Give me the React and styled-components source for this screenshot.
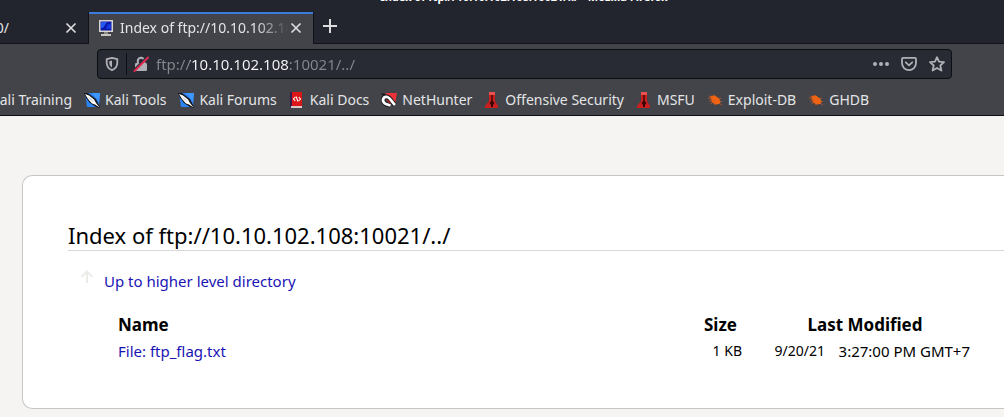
import React, { useState } from "react";
import styled, { createGlobalStyle } from "styled-components";

const GlobalStyle = createGlobalStyle`
    * {
        box-sizing: border-box;
    }
    body {
        margin: 0;
        background: #f5f4f2;
        font-family: "Noto Sans", sans-serif;
        overflow-x: hidden;
    }
`;

const Window = styled.div`
    overflow: hidden;
`;

const Chrome = styled.header`
    background: #42444a;
    color: #e4e4e6;
    font-size: 14px;
    line-height: 20px;
    border-bottom: 1px solid #0d0e12;
`;

const TitleBar = styled.div`
    display: flex;
    justify-content: center;
    align-items: flex-end;
    height: 4px;
    padding-left: 44px;
    overflow: hidden;
    background: #23252e;
    color: #ffffff;
    font-size: 11px;
    font-weight: 700;
    line-height: 14px;
    white-space: nowrap;
`;

const TabStrip = styled.div`
    display: flex;
    height: 40px;
    padding-top: 8px;
    background: #23252e;
    box-shadow: inset 0 -1px #101217;
`;

const Tab = styled.div`
    display: flex;
    align-items: center;
    justify-content: flex-end;
    width: ${({ $active }) => ($active ? "226px" : "88px")};
    padding: 0 9px 0 ${({ $active }) => ($active ? "9px" : "0")};
    background: ${({ $active }) => ($active ? "#42444a" : "transparent")};
    border: solid #101217;
    border-width: ${({ $active }) => ($active ? "0 1px" : "0")};
    box-shadow: ${({ $active }) => ($active ? "inset 0 2px #3a7bdc" : "none")};
`;

const TabTitle = styled.span`
    flex: 1;
    margin-left: 6px;
    overflow: hidden;
    white-space: nowrap;
    mask-image: linear-gradient(to left, transparent, #000 32px);
`;

const ClippedTitle = styled.span`
    display: flex;
    flex: 1;
    justify-content: flex-end;
    margin-right: 54px;
    overflow: hidden;
`;

const IconButton = styled.button`
    display: flex;
    flex: none;
    align-items: center;
    justify-content: center;
    width: ${({ $width }) => $width || 16}px;
    height: 28px;
    padding: 0;
    border: 0;
    background: none;
    color: ${({ $bright }) => ($bright ? "#dcdcde" : "#b0b1b6")};
`;

const NavBar = styled.div`
    padding: 5px 52px 5px 97px;
`;

const UrlBar = styled.div`
    display: flex;
    align-items: center;
    height: 30px;
    padding: 0 4px 0 6px;
    border: 1px solid #0d0e12;
    border-radius: 4px;
    background: #282a34;
`;

const UrlDivider = styled.span`
    width: 1px;
    height: 22px;
    margin: 0 6px;
    background: #0d0e12;
`;

// The host part is brighter than the scheme and the path
const UrlInput = styled.input`
    flex: 1;
    min-width: 0;
    height: 28px;
    margin-left: 7px;
    padding: 0;
    border: 0;
    outline: 0;
    font: inherit;
    font-size: 15px;
    background: linear-gradient(
        to right,
        #86878d 34px,
        #f9f9fa 34px,
        #f9f9fa 132px,
        #86878d 132px
    );
    background-clip: text;
    color: transparent;
`;

const UrlActions = styled.div`
    display: flex;
    gap: 8px;
`;

const Bookmarks = styled.nav`
    display: flex;
    align-items: center;
    gap: 12px;
    height: 31px;
`;

const Bookmark = styled.a`
    display: flex;
    flex: none;
    align-items: center;
    justify-content: flex-end;
    gap: 5px;
    width: ${({ $clip }) => ($clip ? "72px" : "auto")};
    overflow: ${({ $clip }) => ($clip ? "hidden" : "visible")};
    color: inherit;
    text-decoration: none;
    white-space: nowrap;
`;

const Listing = styled.main`
    margin: 59px 0 9px 22px;
    padding: 44px 0 45px 45px;
    border: 1px solid #c8c6c2;
    border-right: 0;
    border-radius: 10px 0 0 10px;
    background: #ffffff;
    color: #000000;
`;

const Heading = styled.h1`
    margin: 0;
    border-bottom: 1px solid #d8d8d8;
    font-size: 22px;
    font-weight: 400;
    line-height: 30px;
`;

const UpRow = styled.p`
    display: flex;
    gap: 10px;
    margin: 18px 0 0 12px;
    font-size: 15px;
    line-height: 24px;
`;

const Link = styled.a`
    color: #1a14b4;
    text-decoration: none;
`;

const FileTable = styled.table`
    width: calc(100% - 84px);
    margin: 18px 34px 0 50px;
    border-collapse: collapse;
    font-size: 14px;
    line-height: 24px;
    white-space: nowrap;
`;

const HeadCell = styled.th`
    padding: 0 0 0 ${({ $indent }) => $indent || 0}px;
    font-size: 17px;
    font-weight: 700;
    line-height: 28px;
    text-align: ${({ $align }) => $align || "center"};
`;

const Cell = styled.td`
    width: ${({ $width }) => $width || "auto"};
    padding: 0;
    font-size: ${({ $large }) => ($large ? "15px" : "inherit")};
    text-align: ${({ $align }) => $align || "left"};
`;

const CloseIcon = () => (
    <svg width="12" height="12" viewBox="0 0 12 12" stroke="currentColor" strokeWidth="1.7">
        <path d="M1.5 1.5l9 9M10.500 1.500l-9 9" />
    </svg>
);

const ComputerIcon = () => (
    <svg width="16" height="16" viewBox="0 0 16 16">
        <path d="M1 0h14v12H1z" fill="#d9d6cf" />
        <path d="M2.500 1.500h11v9h-11z" fill="#0a16a8" />
        <path d="M3 2h6L5 8H3z" fill="#2456f0" />
        <path d="M9 5l4-2v6H8z" fill="#1435d8" />
        <path d="M6 12h4v2H6z" fill="#8c8a85" />
        <path d="M3 14h10v2H3z" fill="#c9c6c0" />
    </svg>
);

const ShieldIcon = () => (
    <svg width="16" height="16" viewBox="0 0 16 16" fill="none" stroke="currentColor">
        <path
            d="M8 1.800l5.300 1.400v3.600c0 3.400-2 6-5.300 7.400-3.300-1.400-5.300-4-5.300-7.400V3.200z"
            strokeWidth="1.800"
            strokeLinejoin="round"
        />
        <path d="M8 4.500v7C6.200 10.300 5.300 8.600 5.300 6.700V5.200z" fill="currentColor" stroke="none" />
    </svg>
);

const LockIcon = () => (
    <svg width="16" height="16" viewBox="0 0 16 16">
        <path d="M4.800 8V5a3.200 3.200 0 016.400 0v3" fill="none" stroke="#b0b1b6" strokeWidth="2" />
        <rect x="2" y="7" width="12" height="8" rx="1.200" fill="#b0b1b6" />
        <path d="M1.500 13.500L14 1" stroke="#282a34" strokeWidth="2" />
        <path d="M1.500 15L15 1.500" stroke="#e22850" strokeWidth="2" strokeLinecap="round" />
    </svg>
);

const DotsIcon = () => (
    <svg width="16" height="16" viewBox="0 0 16 16" fill="currentColor">
        <circle cx="2" cy="8" r="2" />
        <circle cx="8" cy="8" r="2" />
        <circle cx="14" cy="8" r="2" />
    </svg>
);

const PocketIcon = () => (
    <svg
        width="16"
        height="16"
        viewBox="0 0 16 16"
        fill="none"
        stroke="currentColor"
        strokeWidth="1.800"
        strokeLinecap="round"
        strokeLinejoin="round"
    >
        <path d="M2 1.900h12c.6 0 1 .4 1 1v4.200a7 7 0 01-14 0V2.900c0-.6.4-1 1-1z" />
        <path d="M4.800 6.300L8 9.300l3.200-3" />
    </svg>
);

const StarIcon = () => (
    <svg
        width="16"
        height="16"
        viewBox="0 0 16 16"
        fill="none"
        stroke="currentColor"
        strokeWidth="1.800"
        strokeLinejoin="round"
    >
        <path d="M8 1.200l2 4.500 5 .5-3.700 3.300 1.100 5.100L8 12l-4.400 2.600 1.100-5.100L1 6.200l5-.5z" />
    </svg>
);

const UpIcon = () => (
    <svg width="14" height="16" viewBox="0 0 14 16" fill="none" stroke="#ecebe8" strokeWidth="2">
        <path d="M7 14V3M1.500 8L7 2.500 12.500 8" />
    </svg>
);

const ToolIcon = () => (
    <svg width="16" height="16" viewBox="0 0 16 16">
        <path d="M1 1h15l-1 14H3z" fill="#2b83f2" />
        <path d="M8 1h8l-1 9z" fill="#3e97ff" />
        <path d="M0 1l4 0 8 6 3 6 1 3-4-1-6-4-4-5z" fill="#15171c" />
        <path d="M1 2l4 1.500 5 4 2 3.500 3.500 4.500-4.500-3-3-1L4 7z" fill="#ffffff" />
        <path d="M5 5.500l4 4" stroke="#9aa0aa" strokeWidth=".8" />
    </svg>
);

const DocsIcon = () => (
    <svg width="16" height="16" viewBox="0 0 16 16">
        <path d="M1 0h2v15H1z" fill="#3a1c4a" />
        <path d="M3 0h10v14H3z" fill="#dc1616" />
        <path d="M2 14h11v2H2z" fill="#d8c8c8" />
        <path
            d="M6.300 5L4.500 7l1.800 2M9.700 5l1.800 2-1.800 2M7 4.500l2 5"
            fill="none"
            stroke="#ffffff"
            strokeWidth="1.100"
        />
    </svg>
);

const HunterIcon = () => (
    <svg width="16" height="16" viewBox="0 0 16 16">
        <path d="M4 1h12l-2 11z" fill="#ec3238" />
        <path d="M0 1l5 1-3 2z" fill="#17181c" />
        <path
            d="M9.500 13.500L5 12C0 9.500 2 4 6.500 5c3 .8 4 5 7.500 8"
            fill="none"
            stroke="#17181c"
            strokeWidth="4.600"
        />
        <path
            d="M9.500 13.500L5 12C0 9.500 2 4 6.500 5c3 .8 4 5 7.500 8"
            fill="none"
            stroke="#ffffff"
            strokeWidth="2.800"
        />
        <path d="M5.500 8.500c2-.5 2 1.500 4 3" fill="none" stroke="#a82329" strokeWidth="1.400" />
    </svg>
);

const TowerIcon = () => (
    <svg width="16" height="16" viewBox="0 0 16 16">
        <path d="M5 0h6v9l3 5v2H1v-2l4-5z" fill="#c9201f" />
        <path d="M5 0h6v3H5z" fill="#e8514d" />
        <path d="M7.300 3h1.400v6l1.800 2-1.500 2v2H7v-2l-1.500-2 1.800-2z" fill="#3a0707" />
    </svg>
);

const BugIcon = () => (
    <svg width="16" height="16" viewBox="0 0 16 16">
        <path d="M3 4l5-.5 4 3 1.500 3-1 2.500-4 .5-3.500-2z" fill="#ef6414" />
        <path
            d="M1 6l4 1M2 4l3 1M6 3l2 1M2 9l4-.5M3.500 11.500L7 10M7 13l2-1M12 6.500l2-.5M12 11l3 2M13 9.500h2"
            stroke="#c9571f"
            strokeWidth=".8"
        />
    </svg>
);

const bookmarks = [
    { name: "Kali Tools", Icon: ToolIcon },
    { name: "Kali Forums", Icon: ToolIcon },
    { name: "Kali Docs", Icon: DocsIcon },
    { name: "NetHunter", Icon: HunterIcon },
    { name: "Offensive Security", Icon: TowerIcon },
    { name: "MSFU", Icon: TowerIcon },
    { name: "Exploit-DB", Icon: BugIcon },
    { name: "GHDB", Icon: BugIcon },
];

const files = [{ name: "ftp_flag.txt", size: "1 KB", date: "9/20/21", time: "3:27:00 PM GMT+7" }];

const App = () => {
    const [url, setUrl] = useState("ftp://10.10.102.108:10021/../");

    return (
        <Window>
            <GlobalStyle />
            <Chrome>
                <TitleBar>Index of ftp://10.10.102.108:10021/../ - Mozilla Firefox</TitleBar>
                <TabStrip>
                    <Tab>
                        <ClippedTitle>0/</ClippedTitle>
                        <IconButton $bright aria-label="Close tab">
                            <CloseIcon />
                        </IconButton>
                    </Tab>
                    <Tab $active>
                        <ComputerIcon />
                        <TabTitle>Index of ftp://10.10.102.108:10021/../</TabTitle>
                        <IconButton $bright aria-label="Close tab">
                            <CloseIcon />
                        </IconButton>
                    </Tab>
                    <IconButton $bright $width={32} aria-label="New tab">
                        <svg width="14" height="14" viewBox="0 0 14 14" stroke="currentColor" strokeWidth="2">
                            <path d="M7 0v14M0 7h14" />
                        </svg>
                    </IconButton>
                </TabStrip>

                <NavBar>
                    <UrlBar>
                        <IconButton aria-label="Tracking protection">
                            <ShieldIcon />
                        </IconButton>
                        <UrlDivider />
                        <IconButton aria-label="Connection is not secure">
                            <LockIcon />
                        </IconButton>
                        <UrlInput
                            aria-label="Address"
                            value={url}
                            spellCheck={false}
                            onChange={(e) => setUrl(e.target.value)}
                        />
                        <UrlActions>
                            <IconButton $width={20} aria-label="Page actions">
                                <DotsIcon />
                            </IconButton>
                            <IconButton $width={20} aria-label="Save to Pocket">
                                <PocketIcon />
                            </IconButton>
                            <IconButton $width={20} aria-label="Bookmark this page">
                                <StarIcon />
                            </IconButton>
                        </UrlActions>
                    </UrlBar>
                </NavBar>

                <Bookmarks>
                    <Bookmark href="#" $clip>
                        Kali Training
                    </Bookmark>
                    {bookmarks.map(({ name, Icon }) => (
                        <Bookmark href="#" key={name}>
                            <Icon />
                            {name}
                        </Bookmark>
                    ))}
                </Bookmarks>
            </Chrome>

            <Listing>
                <Heading>Index of ftp://10.10.102.108:10021/../</Heading>
                <UpRow>
                    <UpIcon />
                    <Link href="#">Up to higher level directory</Link>
                </UpRow>
                <FileTable>
                    <thead>
                        <tr>
                            <HeadCell $align="left">Name</HeadCell>
                            <HeadCell>Size</HeadCell>
                            <HeadCell colSpan={2} $indent={18}>
                                Last Modified
                            </HeadCell>
                        </tr>
                    </thead>
                    <tbody>
                        {files.map((file) => (
                            <tr key={file.name}>
                                <Cell $large>
                                    <Link href="#">File: {file.name}</Link>
                                </Cell>
                                <Cell $width="43px" $align="right">
                                    {file.size}
                                </Cell>
                                <Cell $width="83px" $align="right">
                                    {file.date}
                                </Cell>
                                <Cell $large $width="145px" $align="right">
                                    {file.time}
                                </Cell>
                            </tr>
                        ))}
                    </tbody>
                </FileTable>
            </Listing>
        </Window>
    );
};

export default App;
